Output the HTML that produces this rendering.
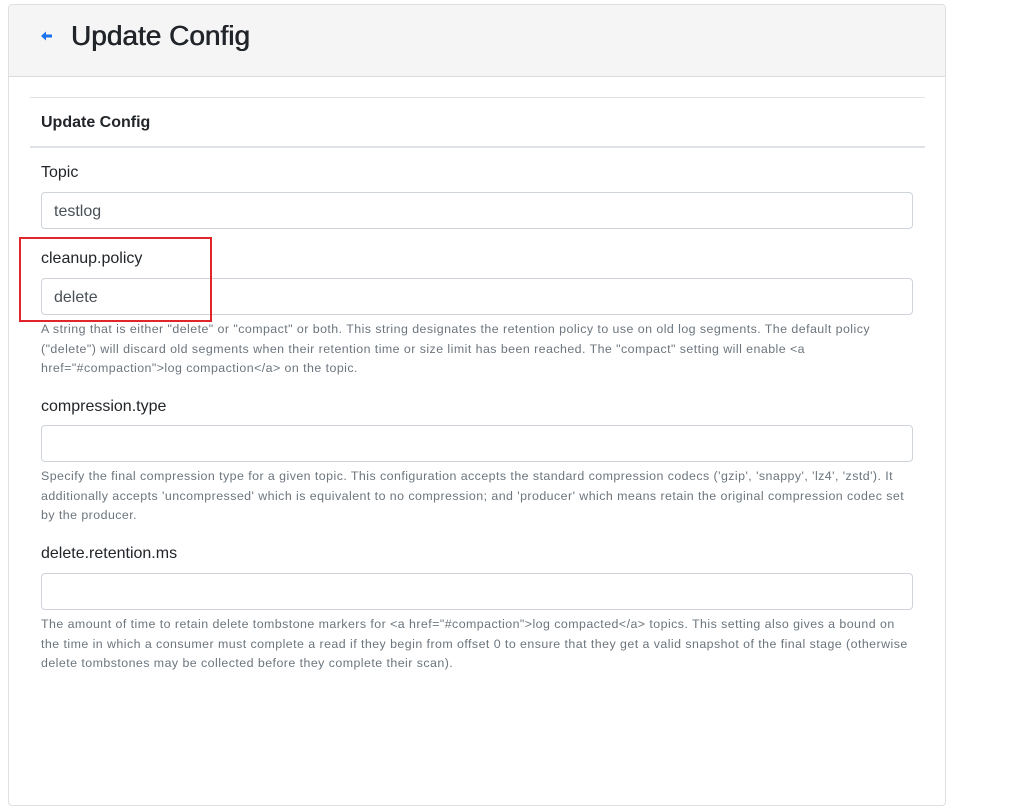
<!DOCTYPE html><html><head><style>
body{margin:0;background:#fff;font-family:"Liberation Sans",sans-serif;color:#212529;width:1027px;height:681px;overflow:hidden;position:relative}
.a{position:absolute}
.card{left:8px;top:4px;width:936px;height:800px;border:1px solid #dfdfdf;border-radius:4px}
.hdr{left:9px;top:5px;width:936px;height:71px;background:#f5f5f5;border-bottom:1px solid #dcdcdc;border-radius:4px 4px 0 0}
.lbl{left:41px;font-size:16px}
.inp{left:41px;width:870px;height:35px;border:1px solid #ced4da;border-radius:4px;font-size:16px;line-height:37px;text-indent:12px;color:#495057}
.help{left:41px;width:875px;font-size:12.4px;line-height:19.5px;color:#6c757d;letter-spacing:0.45px}
</style></head><body>
<div class="a card"></div>
<div class="a hdr"></div>
<svg class="a" style="left:41px;top:31px" width="12" height="10" viewBox="0 0 12 10"><path d="M0 5L5 0.5V3.5H11V6.5H5V9.5Z" fill="#1a73e8"/></svg>
<div class="a" style="left:71px;top:20px;font-size:28px;font-weight:normal;text-shadow:0.4px 0 0 #212529,-0.2px 0 0 #212529">Update Config</div>
<div class="a" style="left:30px;top:97px;width:895px;border-top:1px solid #e2e2e2"></div>
<div class="a" style="left:41px;top:114px;font-size:16px;font-weight:bold">Update Config</div>
<div class="a" style="left:30px;top:146px;width:895px;border-top:2px solid #dee2e6"></div>
<div class="a lbl" style="top:164px">Topic</div>
<div class="a inp" style="top:192px">testlog</div>
<div class="a lbl" style="top:250px">cleanup.policy</div>
<div class="a inp" style="top:278px">delete</div>
<div class="a" style="left:19px;top:237px;width:189px;height:81px;border:2px solid #e0262b"></div>
<div class="a help" style="top:320px">A string that is either "delete" or "compact" or both. This string designates the retention policy to use on old log segments. The default policy ("delete") will discard old segments when their retention time or size limit has been reached. The "compact" setting will enable &lt;a href="#compaction"&gt;log compaction&lt;/a&gt; on the topic.</div>
<div class="a lbl" style="top:398px">compression.type</div>
<div class="a inp" style="top:425px"></div>
<div class="a help" style="top:467px">Specify the final compression type for a given topic. This configuration accepts the standard compression codecs ('gzip', 'snappy', 'lz4', 'zstd'). It additionally accepts 'uncompressed' which is equivalent to no compression; and 'producer' which means retain the original compression codec set by the producer.</div>
<div class="a lbl" style="top:545px">delete.retention.ms</div>
<div class="a inp" style="top:573px"></div>
<div class="a help" style="top:615px">The amount of time to retain delete tombstone markers for &lt;a href="#compaction"&gt;log compacted&lt;/a&gt; topics. This setting also gives a bound on the time in which a consumer must complete a read if they begin from offset 0 to ensure that they get a valid snapshot of the final stage (otherwise delete tombstones may be collected before they complete their scan).</div>
</body></html>
